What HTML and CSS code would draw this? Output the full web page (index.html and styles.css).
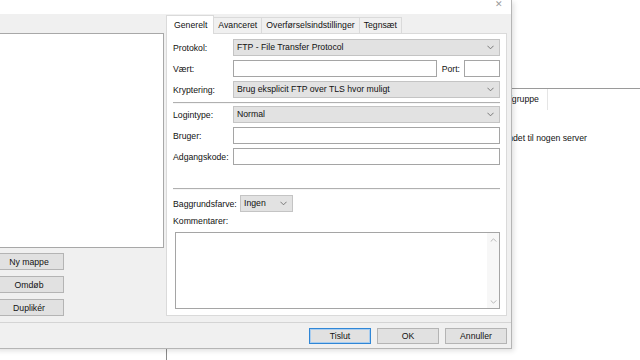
FILE: index.html
```html
<!DOCTYPE html>
<html lang="da">
<head>
    <meta charset="UTF-8">
    <title>Serverhåndtering</title>
    <link rel="stylesheet" href="styles.css">
</head>
<body>
    <!-- hovedvinduet bag dialogen -->
    <div class="app">
        <div class="app-left"></div>
        <div class="app-right">
            <div class="list-head">
                <span class="col" style="width: 100px">Filnavn</span>
                <span class="col" style="width: 60px">Filstørrelse</span>
                <span class="col" style="width: 45px">Filtype</span>
                <span class="col" style="width: 62px">Sidst ændret</span>
                <span class="col" style="width: 56px">Rettigheder</span>
                <span class="col" style="width: 58px">Ejer/gruppe</span>
            </div>
            <div class="empty-msg">Ikke forbundet til nogen server</div>
        </div>
    </div>

    <!-- Serverhåndtering dialog -->
    <div class="dialog">
        <div class="titlebar">
            <span class="close">✕</span>
        </div>
        <div class="dlg-body">
            <div class="dlg-main">
                <div class="left-col">
                    <div class="tree"></div>
                    <div class="side-btns">
                        <button class="btn">Ny mappe</button>
                        <button class="btn">Omdøb</button>
                        <button class="btn">Duplikér</button>
                    </div>
                </div>

                <div class="right-col">
                    <div class="tabs">
                        <span class="tab active">Generelt</span>
                        <span class="tab">Avanceret</span>
                        <span class="tab">Overførselsindstillinger</span>
                        <span class="tab">Tegnsæt</span>
                    </div>
                    <div class="tab-panel">
                        <div class="row">
                            <label class="lbl">Protokol:</label>
                            <div class="select grow">FTP - File Transfer Protocol<svg class="chev" viewBox="0 0 8 5"><polyline points="0.5,0.5 4,4 7.5,0.5"/></svg></div>
                        </div>
                        <div class="row">
                            <label class="lbl">Vært:</label>
                            <div class="input grow"></div>
                            <label class="lbl-port">Port:</label>
                            <div class="input port"></div>
                        </div>
                        <div class="row">
                            <label class="lbl">Kryptering:</label>
                            <div class="select grow">Brug eksplicit FTP over TLS hvor muligt<svg class="chev" viewBox="0 0 8 5"><polyline points="0.5,0.5 4,4 7.5,0.5"/></svg></div>
                        </div>

                        <div class="sep sep-1"></div>

                        <div class="row">
                            <label class="lbl">Logintype:</label>
                            <div class="select grow">Normal<svg class="chev" viewBox="0 0 8 5"><polyline points="0.5,0.5 4,4 7.5,0.5"/></svg></div>
                        </div>
                        <div class="row">
                            <label class="lbl">Bruger:</label>
                            <div class="input grow"></div>
                        </div>
                        <div class="row">
                            <label class="lbl">Adgangskode:</label>
                            <div class="input grow"></div>
                        </div>

                        <div class="sep sep-2"></div>

                        <div class="row row-color">
                            <label class="lbl lbl-wide">Baggrundsfarve:</label>
                            <div class="select small">Ingen<svg class="chev" viewBox="0 0 8 5"><polyline points="0.5,0.5 4,4 7.5,0.5"/></svg></div>
                        </div>
                        <div class="comment-lbl">Kommentarer:</div>
                        <div class="textarea">
                            <div class="scroll">
                                <svg class="sc-arrow" viewBox="0 0 8 5"><polyline points="0.5,4.5 4,1 7.5,4.5"/></svg>
                                <svg class="sc-arrow" viewBox="0 0 8 5"><polyline points="0.5,0.5 4,4 7.5,0.5"/></svg>
                            </div>
                        </div>
                    </div>
                </div>
            </div>

            <div class="dlg-foot">
                <button class="btn foot-btn default">Tislut</button>
                <button class="btn foot-btn">OK</button>
                <button class="btn foot-btn">Annuller</button>
            </div>
        </div>
    </div>
</body>
</html>
```

FILE: styles.css
```css
* {
    margin: 0;
    padding: 0;
    box-sizing: border-box;
}

body {
    width: 640px;
    height: 360px;
    overflow: hidden;
    background: #fff;
    font-family: "Liberation Sans", Arial, sans-serif;
    font-size: 8.7px;
    color: #111;
    position: relative;
}

/* hovedvindue */
.app {
    display: flex;
    height: 360px;
}

.app-left {
    width: 167px;
    border-right: 1px solid #8a8a8a;
}

.app-right {
    flex: 1;
    padding-top: 88px;
}

.list-head {
    display: flex;
    height: 22px;
    border-top: 1px solid #9a9a9a;
}

.col {
    flex-shrink: 0;
    padding-left: 4px;
    line-height: 20px;
    white-space: nowrap;
    border-right: 1px solid #e5e5e5;
}

.empty-msg {
    padding-left: 303px;
    margin-top: 22px;
    line-height: 12px;
    white-space: nowrap;
}

/* dialog */
.dialog {
    position: absolute;
    left: -6px;
    top: 0;
    width: 518px;
    height: 349px;
    border-right: 1px solid #b5b5b5;
    border-bottom: 1px solid #b5b5b5;
    box-shadow: 2px 2px 5px rgba(0, 0, 0, 0.12);
    display: flex;
    flex-direction: column;
}

.titlebar {
    height: 14px;
    background: #fff;
    display: flex;
    justify-content: flex-end;
    padding-right: 8px;
}

.close {
    font-size: 9px;
    line-height: 9px;
    color: #9a9a9a;
}

.dlg-body {
    flex: 1;
    background: #f0f0f0;
    display: flex;
    flex-direction: column;
}

.dlg-main {
    display: flex;
    height: 308px;
}

.left-col {
    width: 170px;
    padding-top: 19px;
}

.tree {
    height: 215px;
    background: #fff;
    border: 1px solid #a8a8a8;
}

.side-btns {
    display: flex;
    flex-direction: column;
    gap: 6px;
    margin-top: 5px;
}

.btn {
    font-family: inherit;
    font-size: 8.7px;
    color: #111;
    background: #e1e1e1;
    border: 1px solid #b4b4b4;
    height: 17px;
    width: 70px;
}

.right-col {
    width: 341px;
    margin-left: 2px;
}

.tabs {
    display: flex;
    align-items: flex-end;
    height: 19px;
    padding-top: 1px;
}

.tab {
    height: 16px;
    padding: 0 4px;
    line-height: 15px;
    border: 1px solid #dadada;
    border-bottom: none;
    border-left: none;
    background: #f0f0f0;
    white-space: nowrap;
}

.tab.active {
    height: 19px;
    line-height: 19px;
    padding: 0 6px 0 7px;
    border-left: 1px solid #dadada;
    background: #fff;
    margin-bottom: -1px;
    position: relative;
}

.tab-panel {
    height: 283px;
    background: #fff;
    border: 1px solid #dadada;
    padding: 5px 6px 0 6px;
}

.row {
    display: flex;
    align-items: center;
    height: 17px;
    margin-bottom: 4px;
}

.lbl {
    width: 60px;
    flex-shrink: 0;
}

.lbl-wide {
    width: 67px;
}

.lbl-port {
    margin: 0 4px 0 5px;
}

.grow {
    flex: 1;
}

.select {
    height: 17px;
    background: #e2e2e2;
    border: 1px solid #c4c4c4;
    padding-left: 3px;
    line-height: 15px;
    position: relative;
}

.select.small {
    width: 53px;
}

.chev {
    position: absolute;
    right: 5px;
    top: 5px;
    width: 7px;
    height: 5px;
    fill: none;
    stroke: #6a6a6a;
    stroke-width: 1;
}

.input {
    height: 17px;
    background: #fff;
    border: 1px solid #a5a5a5;
}

.input.port {
    width: 36px;
}

.sep {
    border-top: 1px solid #b0b0b0;
    border-bottom: 1px solid #f6f6f6;
}

.sep-1 {
    margin: 2px 0 2px;
}

.sep-2 {
    margin: 23px 0 5px;
}

.row-color {
    margin-bottom: 2px;
}

.comment-lbl {
    line-height: 14px;
}

.textarea {
    margin: 4px 0 0 2px;
    height: 77px;
    border: 1px solid #a5a5a5;
    background: #fff;
    display: flex;
    justify-content: flex-end;
}

.scroll {
    width: 12px;
    background: #f7f7f7;
    display: flex;
    flex-direction: column;
    justify-content: space-between;
    align-items: center;
    padding: 5px 0 4px;
}

.sc-arrow {
    width: 7px;
    height: 4px;
    fill: none;
    stroke: #a8a8a8;
    stroke-width: 1;
}

.dlg-foot {
    flex: 1;
    border-top: 1px solid #d4d4d4;
    display: flex;
    justify-content: flex-end;
    gap: 6px;
    padding: 5px 4px 0 0;
}

.foot-btn {
    width: 62px;
    height: 16px;
}

.foot-btn.default {
    border-color: #2f86d6;
    box-shadow: inset 0 0 0 1px #a9cdef;
}
```
